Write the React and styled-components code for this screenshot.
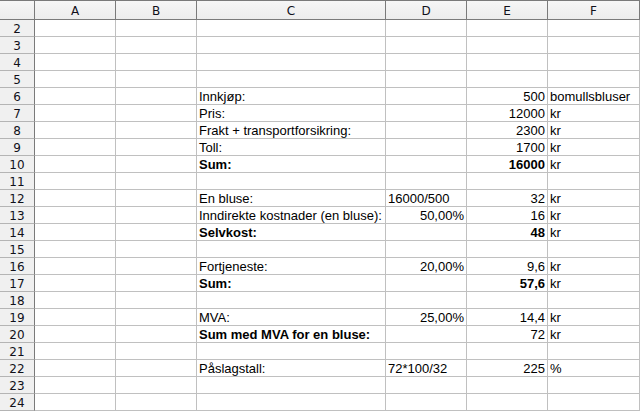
import React from "react";
import styled, { createGlobalStyle } from "styled-components";

const GlobalStyle = createGlobalStyle`
    html, body {
        margin: 0;
        padding: 0;
        background: #ffffff;
    }
    body {
        width: 640px;
        height: 412px;
        overflow: hidden;
    }
`;

const COLS = ["A", "B", "C", "D", "E", "F"];

// row number -> { C, D, E, F } ; objects may carry bold / align
const rows = {
    6: { C: "Innkjøp:", E: "500", F: "bomullsbluser" },
    7: { C: "Pris:", E: "12000", F: "kr" },
    8: { C: "Frakt + transportforsikring:", E: "2300", F: "kr" },
    9: { C: "Toll:", E: "1700", F: "kr" },
    10: { C: { v: "Sum:", b: true }, E: { v: "16000", b: true }, F: "kr" },
    12: { C: "En bluse:", D: { v: "16000/500", left: true }, E: "32", F: "kr" },
    13: { C: "Inndirekte kostnader (en bluse):", D: "50,00%", E: "16", F: "kr" },
    14: { C: { v: "Selvkost:", b: true }, E: { v: "48", b: true }, F: "kr" },
    16: { C: "Fortjeneste:", D: "20,00%", E: "9,6", F: "kr" },
    17: { C: { v: "Sum:", b: true }, E: { v: "57,6", b: true }, F: "kr" },
    19: { C: "MVA:", D: "25,00%", E: "14,4", F: "kr" },
    20: { C: { v: "Sum med MVA for en bluse:", b: true }, E: "72", F: "kr" },
    22: { C: "Påslagstall:", D: { v: "72*100/32", left: true }, E: "225", F: "%" },
};

// numeric columns are right aligned unless flagged
const rightCols = { D: true, E: true };

export default function App() {
    const rowNums = [];
    for (let r = 2; r <= 24; r++) rowNums.push(r);

    return (
        <>
            <GlobalStyle />
            <Sheet>
                <Corner />
                {COLS.map((c) => (
                    <ColHead key={c}>{c}</ColHead>
                ))}

                {rowNums.map((r) => (
                    <React.Fragment key={r}>
                        <RowHead>{r}</RowHead>
                        {COLS.map((c) => {
                            const raw = rows[r] && rows[r][c];
                            const cell = typeof raw === "string" ? { v: raw } : raw || {};
                            const right = rightCols[c] && !cell.left;
                            return (
                                <Cell key={c} $bold={cell.b} $right={right}>
                                    {cell.v}
                                </Cell>
                            );
                        })}
                    </React.Fragment>
                ))}
            </Sheet>
        </>
    );
}

const Sheet = styled.div`
    display: grid;
    grid-template-columns: 35px 81px 81px 189px 81px 81px 92px;
    grid-template-rows: 20px repeat(23, 17px);
    width: 640px;
    background: #ffffff;
`;

const HeadBase = styled.div`
    box-sizing: border-box;
    background: linear-gradient(#f6f6f6, #ececec);
    font-family: "DejaVu Sans", "Liberation Sans", sans-serif;
    font-size: 12px;
    color: #10101a;
    display: flex;
    align-items: center;
    justify-content: center;
`;

const Corner = styled(HeadBase)`
    border-top: 1px solid #7a7a7a;
    border-right: 1px solid #7a7a7a;
    border-bottom: 1px solid #7a7a7a;
`;

const ColHead = styled(HeadBase)`
    border-top: 1px solid #7a7a7a;
    border-right: 1px solid #7a7a7a;
    border-bottom: 1px solid #7a7a7a;
    padding-top: 1px;
`;

const RowHead = styled(HeadBase)`
    background: #f0f0f0;
    border-right: 1px solid #7a7a7a;
    border-bottom: 1px solid #b4b4b4;
    padding-top: 1px;
`;

const Cell = styled.div`
    box-sizing: border-box;
    border-right: 1px solid #c0c0c0;
    border-bottom: 1px solid #c0c0c0;
    font-family: "Liberation Sans", Arial, sans-serif;
    font-size: 13px;
    line-height: 16px;
    padding: 1px 2px 0 2px;
    color: #000000;
    white-space: nowrap;
    overflow: visible;
    font-weight: ${(p) => (p.$bold ? 700 : 400)};
    text-align: ${(p) => (p.$right ? "right" : "left")};
`;
